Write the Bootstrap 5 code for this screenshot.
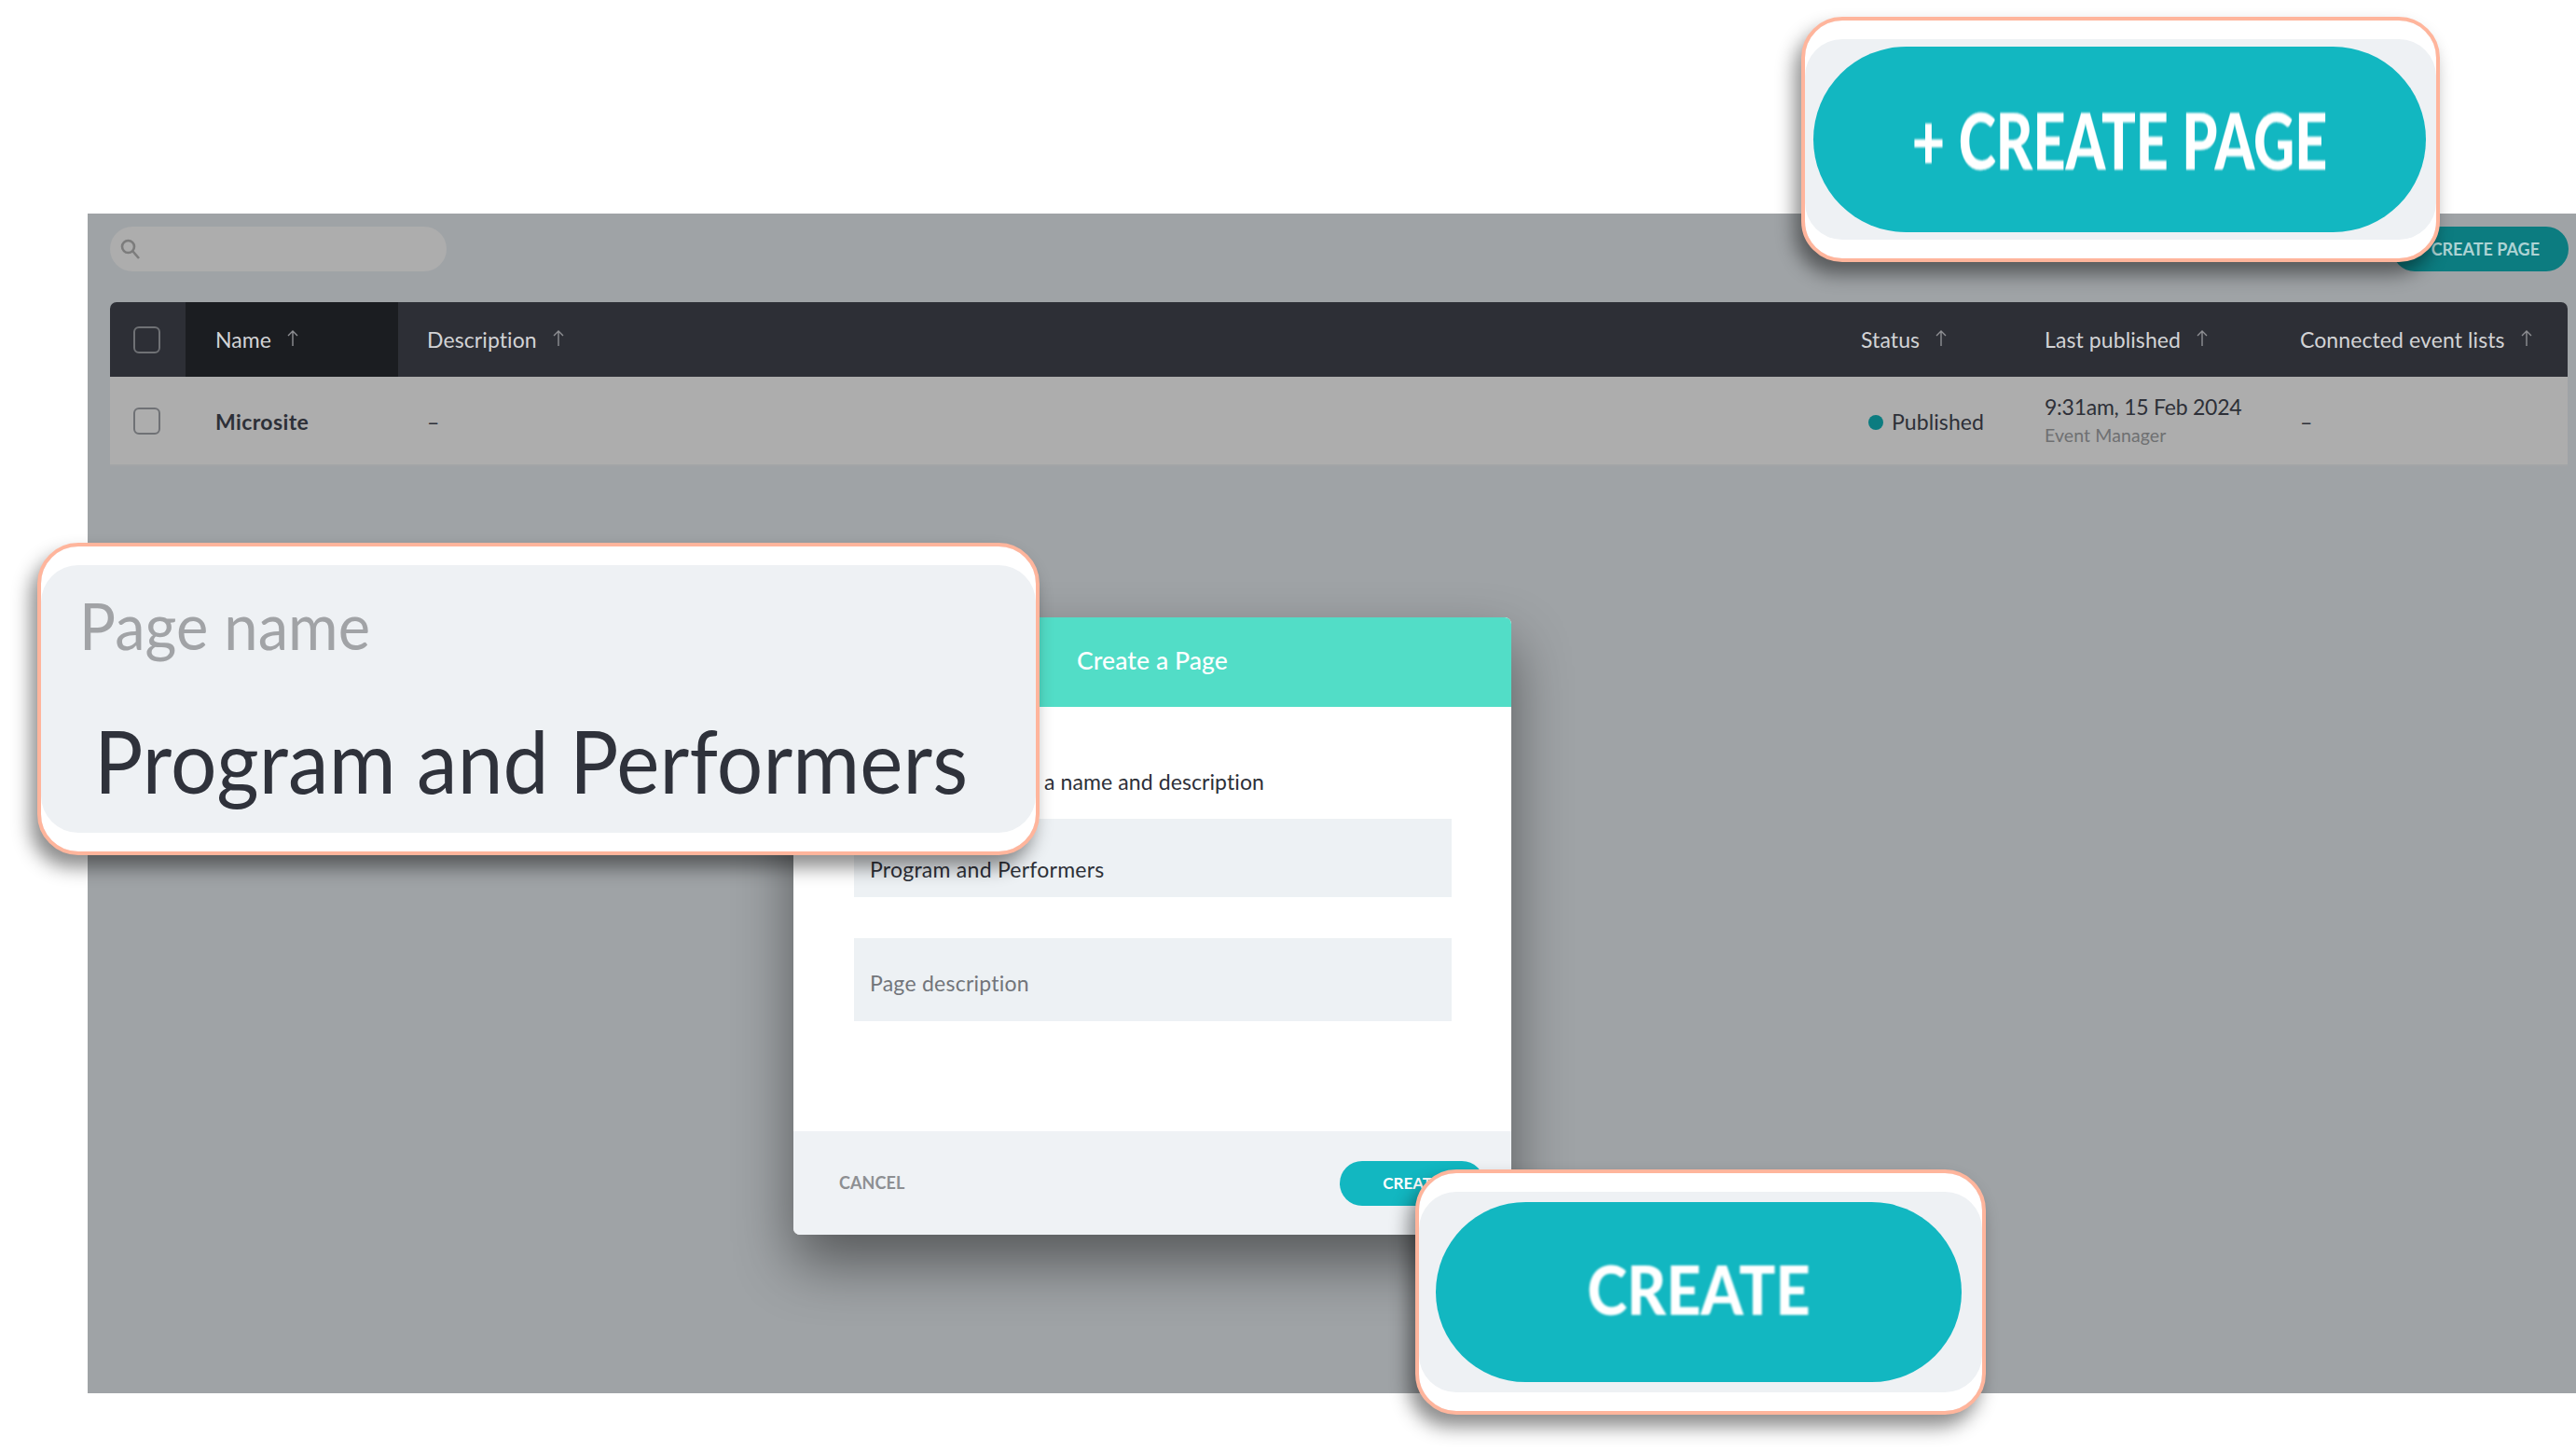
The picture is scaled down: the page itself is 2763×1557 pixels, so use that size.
<!DOCTYPE html>
<html lang="en">
<head>
    <meta charset="UTF-8">
    <meta name="viewport" content="width=device-width, initial-scale=1.0">
    <title>Create a Page</title>
    <link href="https://cdn.jsdelivr.net/npm/bootstrap@5.3.0/dist/css/bootstrap.min.css" rel="stylesheet">
    <style>
        body { background: #fff; font-family: "Lato", "Liberation Sans", sans-serif; font-size: 23px; letter-spacing: .1px; color: #2d3038; }
        .stage { position: relative; width: 2763px; height: 1557px; padding-top: 229px; overflow: hidden; }
        .backdrop { margin-left: 94px; height: 1265px; background: #9fa3a6; padding: 14px 9px 0 24px; }
        .toolbar { height: 48px; margin-bottom: 33px; }
        .search-box { width: 361px; height: 48px; background: #adadad; border-radius: 24px; padding-left: 10px; }
        .btn-dim { width: 189px; height: 48px; margin-right: -1px; background: #0c7c80; color: #add3d4; font-size: 18px; font-weight: 700; border: 0; padding: 0 31px 0 0; text-align: right; }
        .pages-wrap { border-radius: 7px 7px 0 0; overflow: hidden; }
        .pages { table-layout: fixed; width: 2636px; margin: 0; }
        .pages th, .pages td { border: 0; vertical-align: middle; padding: 0 0 0 31px; }
        .pages thead th { height: 80px; background: #2d2f36; color: #d2d3d5; font-weight: 400; }
        .pages thead th.sorted { background: #1b1d21; padding-left: 32px; }
        .pages tbody td { height: 95px; background: #adadad; color: #2d3038; border-bottom: 2px solid #a2a4a6; padding-top: 2px; }
        .pages tbody td.name-cell { padding-left: 32px; font-weight: 700; letter-spacing: .4px; }
        .pages .c-check { width: 81px; padding: 0 0 0 25px !important; }
        .pages .c-name { width: 228px; }
        .pages .c-status { width: 196px; }
        .pages .c-last { width: 274px; padding-left: 32px; }
        .pages tbody td.c-last { padding-top: 6px; }
        .pages .c-conn { width: 319px; padding-left: 32px; }
        .box-check { display: block; width: 29px; height: 29px; border-radius: 6px; border: 2px solid #6f7175; }
        .sort-arrow { margin: -8px 0 0 17px; vertical-align: middle; }
        .dash { color: #5f6062; }
        .dot { display: inline-block; width: 16px; height: 16px; border-radius: 50%; background: #0c7c80; margin: 0 9px 0 8px; }
        .date-line { line-height: 30px; margin-top: -4px; letter-spacing: -.25px; }
        .sub-line { font-size: 19.5px; line-height: 32px; color: #6f7072; }
        .dialog { position: absolute; left: 851px; top: 662px; width: 770px; height: 662px; border: 0; border-radius: 7px; box-shadow: 0 30px 62px rgba(0,0,0,.46); overflow: hidden; }
        .dialog .card-header { height: 96px; background: #52ddc7; color: #fff; border: 0; border-radius: 6px 6px 0 0; font-size: 26.5px; font-weight: 500; padding-bottom: 11px; }
        .dialog .card-body { flex: 0 0 455px; padding: 65px 64px 0 65px; }
        .dialog-intro { line-height: 30px; margin: 0 0 25px; padding-left: 204px; white-space: nowrap; }
        .dialog input.form-control { background: #edf1f4; border: 0; border-radius: 0; font-size: 23px; letter-spacing: .25px; color: #2d3038; padding: 0 17px; box-shadow: none; }
        .dialog input::placeholder { color: #72757a; opacity: 1; }
        .input-name { height: 84px; padding-top: 24px !important; margin-bottom: 44px; }
        .input-desc { height: 89px; padding-top: 6px !important; }
        .dialog .card-footer { height: 111px; background: #eff2f5; border: 0; padding: 0 29px 0 49px; }
        .cancel-link { font-size: 18px; font-weight: 700; color: #8d8f92; }
        .btn-teal { background: #12b7c1; color: #fff; font-weight: 700; border: 0; padding: 0; }
        .btn-teal:hover { background: #12b7c1; color: #fff; }
        .btn-create { width: 155px; height: 48px; font-size: 17px; }
        .callout { position: absolute; background: #eef1f4; border: 4px solid #ffb59c; border-radius: 44px; box-shadow: inset 0 20px 0 #fff, inset 0 -20px 0 #fff, -7px 13px 20px rgba(0,0,0,.45); }
        .callout-page { left: 1932px; top: 18px; width: 685px; height: 263px; }
        .callout-page .btn-teal { width: 657px; height: 199px; margin-left: -3px; }
        .callout-name { left: 40px; top: 582px; width: 1075px; height: 335px; padding: 42px 0 0 41px; }
        .zoom-label, .zoom-value { white-space: nowrap; transform-origin: left center; }
        .zoom-label { font-size: 70px; line-height: 84px; color: #a1a3a6; transform: scaleX(.93); }
        .zoom-value { font-size: 94px; line-height: 110px; margin: 48px 0 0 16px; color: #2f323b; transform: scaleX(.93); }
        .callout-create { left: 1518px; top: 1254px; width: 612px; height: 263px; }
        .callout-create .btn-teal { width: 564px; height: 193px; margin-left: -4px; }
        .zoom-page { display: block; font-size: 83px; font-weight: 900; margin-top: 2px; filter: blur(1px); transform: scaleX(.735); white-space: nowrap; }
        .zoom-create { display: block; font-size: 72px; font-weight: 900; margin-top: -8px; filter: blur(1px); transform: scaleX(.9); }
        .soft { filter: blur(.7px); }
    </style>
</head>
<body>
    <div class="stage">
        <div class="backdrop">
            <div class="toolbar d-flex justify-content-between align-items-center">
                <div class="search-box d-flex align-items-center">
                    <svg width="24" height="24" viewBox="0 0 24 24" fill="none" stroke="#7c7c7c" stroke-width="2.6"><circle cx="9.5" cy="9.5" r="6.5"/><path d="M14.5 14.5 21 22"/></svg>
                </div>
                <button class="btn btn-dim rounded-pill" type="button">CREATE PAGE</button>
            </div>
            <div class="pages-wrap">
                <table class="table pages">
                    <thead>
                        <tr>
                            <th class="c-check"><span class="box-check"></span></th>
                            <th class="c-name sorted">Name<svg class="sort-arrow" width="12" height="17" viewBox="0 0 12 17" fill="none" stroke="#8f9094" stroke-width="1.4"><path d="M6 17V1M1 6l5-5 5 5"/></svg></th>
                            <th>Description<svg class="sort-arrow" width="12" height="17" viewBox="0 0 12 17" fill="none" stroke="#8f9094" stroke-width="1.4"><path d="M6 17V1M1 6l5-5 5 5"/></svg></th>
                            <th class="c-status">Status<svg class="sort-arrow" width="12" height="17" viewBox="0 0 12 17" fill="none" stroke="#8f9094" stroke-width="1.4"><path d="M6 17V1M1 6l5-5 5 5"/></svg></th>
                            <th class="c-last">Last published<svg class="sort-arrow" width="12" height="17" viewBox="0 0 12 17" fill="none" stroke="#8f9094" stroke-width="1.4"><path d="M6 17V1M1 6l5-5 5 5"/></svg></th>
                            <th class="c-conn">Connected event lists<svg class="sort-arrow" width="12" height="17" viewBox="0 0 12 17" fill="none" stroke="#8f9094" stroke-width="1.4"><path d="M6 17V1M1 6l5-5 5 5"/></svg></th>
                        </tr>
                    </thead>
                    <tbody>
                        <tr>
                            <td class="c-check"><span class="box-check"></span></td>
                            <td class="name-cell">Microsite</td>
                            <td class="dash">–</td>
                            <td><span class="dot"></span>Published</td>
                            <td class="c-last"><div class="date-line">9:31am, 15 Feb 2024</div><div class="sub-line">Event Manager</div></td>
                            <td class="c-conn dash">–</td>
                        </tr>
                    </tbody>
                </table>
            </div>
        </div>

        <div class="card dialog">
            <div class="card-header d-flex align-items-center justify-content-center">Create a Page</div>
            <div class="card-body">
                <p class="dialog-intro">a name and description</p>
                <input class="form-control input-name" type="text" value="Program and Performers">
                <input class="form-control input-desc" type="text" placeholder="Page description">
            </div>
            <div class="card-footer d-flex align-items-center justify-content-between">
                <span class="cancel-link">CANCEL</span>
                <button class="btn btn-teal btn-create rounded-pill" type="button">CREATE</button>
            </div>
        </div>

        <div class="callout callout-page d-flex align-items-center justify-content-center">
            <button class="btn btn-teal rounded-pill" type="button"><span class="zoom-page">+ CREATE PAGE</span></button>
        </div>
        <div class="callout callout-name">
            <div class="zoom-label soft">Page name</div>
            <div class="zoom-value soft">Program and Performers</div>
        </div>
        <div class="callout callout-create d-flex align-items-center justify-content-center">
            <button class="btn btn-teal rounded-pill" type="button"><span class="zoom-create">CREATE</span></button>
        </div>
    </div>
    <script src="https://cdn.jsdelivr.net/npm/bootstrap@5.3.0/dist/js/bootstrap.bundle.min.js"></script>
</body>
</html>
